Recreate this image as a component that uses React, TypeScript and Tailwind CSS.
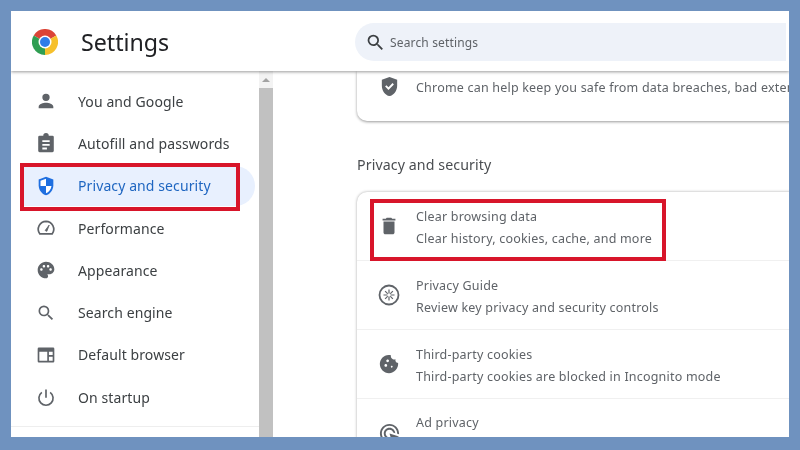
import React from "react";

const G = "#5f6368";

function Ico({ size = 20, children }: { size?: number; children: React.ReactNode }) {
  return (
    <svg width={size} height={size} viewBox="0 0 24 24">
      {children}
    </svg>
  );
}

const searchPath =
  "M15.5 14h-.79l-.28-.27A6.471 6.471 0 0 0 16 9.5 6.500 6.500 0 1 0 9.500 16c1.610 0 3.090-.59 4.230-1.570l.27.28v.79l5 4.990L20.490 19l-4.990-5zm-6 0C7.010 14 5 11.990 5 9.500S7.010 5 9.500 5 14 7.010 14 9.500 11.990 14 9.500 14z";

function ChromeLogo() {
  return (
    <svg width="26" height="26" viewBox="0 0 24 24">
      <path d="M12 12 1.600 6A12 12 0 0 1 22.400 6Z" fill="#db4437" />
      <path d="M12 12 22.400 6A12 12 0 0 1 12 24Z" fill="#f6c02c" />
      <path d="M12 12 12 24A12 12 0 0 1 1.600 6Z" fill="#2f9e52" />
      <circle cx="12" cy="12" r="6" fill="#fff" />
      <circle cx="12" cy="12" r="4.600" fill="#2f7de8" />
    </svg>
  );
}

const sideItems: { label: string; active?: boolean; size?: number; icon: React.ReactNode }[] = [
  {
    label: "You and Google",
    size: 22,
    icon: (
      <path d="M12 12a4 4 0 1 0 0-8 4 4 0 0 0 0 8Zm0 2c-3 0-8 1.500-8 4.200V20h16v-1.800C20 15.500 15 14 12 14Z" fill={G} />
    ),
  },
  {
    label: "Autofill and passwords",
    size: 22,
    icon: (
      <path
        fillRule="evenodd"
        d="M5 4h4a3 3 0 0 1 6 0h4a1.500 1.500 0 0 1 1.500 1.500v15A1.500 1.500 0 0 1 19 22H5a1.500 1.500 0 0 1-1.500-1.500v-15A1.500 1.500 0 0 1 5 4Zm3 5v2h8V9Zm0 4v2h8v-2Zm0 4v2h5v-2Z"
        fill={G}
      />
    ),
  },
  {
    label: "Privacy and security",
    active: true,
    size: 22,
    icon: (
      <>
        <path d="M12 2 4 5v6.090c0 5.050 3.410 9.760 8 10.910 4.590-1.150 8-5.860 8-10.910V5Z" fill="#1f6fe0" />
        <path d="M12 4.100 6 6.300V12h6ZM12 12v7.900c3-1.100 5.500-4.200 6-7.900Z" fill="#fff" />
      </>
    ),
  },
  {
    label: "Performance",
    icon: (
      <>
        <path d="M4.500 19A9.500 9.500 0 0 1 12 4a9.500 9.500 0 0 1 7.500 15Z" fill="none" stroke={G} strokeWidth="2" />
        <path d="M11 15 15.800 8.500 13 16Z" fill={G} stroke={G} strokeWidth="1" />
      </>
    ),
  },
  {
    label: "Appearance",
    icon: (
      <path
        d="M12 2C6.490 2 2 6.490 2 12s4.490 10 10 10c1.380 0 2.500-1.120 2.500-2.500 0-.61-.23-1.200-.64-1.670-.08-.1-.13-.21-.13-.33 0-.28.22-.5.5-.5H16c3.310 0 6-2.690 6-6 0-4.960-4.490-9-10-9zm-5.500 11c-.83 0-1.500-.67-1.500-1.500S5.670 10 6.500 10 8 10.670 8 11.500 7.330 13 6.500 13zm3-4C8.670 9 8 8.330 8 7.500S8.670 6 9.500 6s1.500.67 1.500 1.500S10.330 9 9.500 9zm5 0c-.83 0-1.500-.67-1.500-1.500S13.670 6 14.500 6s1.500.67 1.500 1.500S15.330 9 14.500 9zm3 4c-.83 0-1.500-.67-1.500-1.500s.67-1.500 1.500-1.500 1.500.67 1.500 1.500-.67 1.500-1.500 1.500z"
        fill={G}
      />
    ),
  },
  { label: "Search engine", icon: <path d={searchPath} fill={G} /> },
  {
    label: "Default browser",
    icon: (
      <path
        fillRule="evenodd"
        d="M3.500 3h17A1.500 1.500 0 0 1 22 4.500v15a1.500 1.500 0 0 1-1.500 1.500h-17A1.500 1.500 0 0 1 2 19.500v-15A1.500 1.500 0 0 1 3.500 3ZM4 8v11h9.500V8Zm11.500 0v4H20V8Zm0 6v5H20v-5Z"
        fill={G}
      />
    ),
  },
  {
    label: "On startup",
    icon: (
      <>
        <path d="M12 3v10" stroke={G} strokeWidth="2" fill="none" />
        <path d="M7 6.500a8.500 8.500 0 1 0 10 0" stroke={G} strokeWidth="2" fill="none" />
      </>
    ),
  },
];

function Row({ title, sub, icon }: { title: string; sub?: string; icon: React.ReactNode }) {
  return (
    <div className="relative flex h-[69px] shrink-0 items-center border-b border-[#f0f0f0] last:border-b-0">
      <div className="flex w-[59px] shrink-0 justify-center pl-[5px]">{icon}</div>
      <div className={`text-[12.500px] leading-[22px] tracking-[0.2px] text-[#5f6368] ${sub ? "pt-[4px]" : ""}`}>
        <div>{title}</div>
        {sub ? <div>{sub}</div> : <div className="h-[22px]" />}
      </div>
    </div>
  );
}

export default function App() {
  return (
    <div
      className="h-[450px] w-[800px] overflow-hidden bg-[#6f92bf] pt-[11px] pl-[11px]"
      style={{ fontFamily: '"Noto Sans", "Open Sans", sans-serif' }}
    >
      <div className="relative flex h-[426px] w-[778px] flex-col overflow-hidden bg-white blur-[0.3px]">
        <header className="relative z-10 flex h-[60px] shrink-0 items-center bg-white pt-[2px] shadow-[0_1px_3px_rgba(0,0,0,0.4)]">
          <div className="ml-[21px] flex w-[49px] shrink-0">
            <ChromeLogo />
          </div>
          <div className="w-[274px] shrink-0 pt-[2px] text-[23.200px] leading-none text-[#202124]">Settings</div>
          <div className="mr-[3px] flex h-[38px] flex-1 items-center rounded-l-[19px] bg-[#eef2f9] pl-[10px]">
            <Ico size={21}>
              <path d={searchPath} fill="#3c4043" />
            </Ico>
            <span className="ml-[4px] pt-[2px] text-[12px] tracking-[0.15px] text-[#5f6368]">Search settings</span>
          </div>
        </header>

        <div className="flex min-h-0 flex-1">
          <aside className="flex w-[248px] shrink-0 flex-col pt-[9px]">
            {sideItems.map((it) => (
              <div key={it.label} className="relative flex h-[42.300px] shrink-0 items-center">
                {it.active && (
                  <div className="absolute top-[1px] right-[4px] bottom-[1px] left-[9px] rounded-r-[21px] bg-[#e8f0fe]" />
                )}
                {it.active && (
                  <div className="absolute top-[-1.500px] bottom-[-4.500px] left-[8.500px] w-[220.500px] border-[4px] border-[#d8152a]" />
                )}
                <div className="relative flex w-[67px] shrink-0 justify-center pl-[2px]">
                  <Ico size={it.size ?? 20}>{it.icon}</Ico>
                </div>
                <span
                  className={`relative text-[14px] tracking-[0.1px] ${it.active ? "text-[#1f66c1]" : "text-[#3c4043]"}`}
                >
                  {it.label}
                </span>
              </div>
            ))}
            <div className="mt-auto mb-[10px] border-t border-[#eeeeee]" />
          </aside>

          <div className="flex w-[14px] shrink-0 flex-col bg-[#f3f3f3]">
            <div className="flex h-[17px] shrink-0 items-center justify-center">
              <div className="h-0 w-0 border-x-[4px] border-b-[4px] border-x-transparent border-b-[#a3a3a3]" />
            </div>
            <div className="flex-1 bg-[#c1c1c1]" />
          </div>

          <main className="min-w-0 flex-1 overflow-hidden pl-[84px]">
            <div className="-mr-[20px] flex h-[50px] items-start rounded-b-[10px] bg-white pt-[4px] shadow-[0_1px_3px_rgba(0,0,0,0.4)]">
              <div className="flex w-[59px] shrink-0 justify-center pl-[5px]">
                <Ico size={23}>
                  <path
                    d="M12 2 4 5v6.090c0 5.050 3.410 9.760 8 10.910 4.590-1.150 8-5.860 8-10.910V5l-8-3zm-1.060 13.540L7.400 12l1.410-1.410 2.120 2.120 4.240-4.240 1.410 1.410-5.640 5.660z"
                    fill={G}
                  />
                </Ico>
              </div>
              <div className="pt-[2px] text-[12.500px] leading-[22px] tracking-[0.2px] whitespace-nowrap text-[#5f6368]">
                Chrome can help keep you safe from data breaches, bad extensions, and more
              </div>
            </div>

            <h2 className="mt-[32px] text-[14.200px] leading-[24px] font-normal tracking-[0.1px] text-[#4a4d51]">
              Privacy and security
            </h2>

            <div className="relative -mr-[20px] mt-[15px] flex flex-col rounded-t-[10px] bg-white shadow-[0_0_3px_rgba(0,0,0,0.35)]">
              <div className="absolute top-[7px] left-[13px] z-10 h-[62px] w-[296px] border-[4px] border-[#d8152a]" />
              <Row
                title="Clear browsing data"
                sub="Clear history, cookies, cache, and more"
                icon={
                  <Ico size={22}>
                    <path
                      d="M6 19c0 1.100.9 2 2 2h8c1.100 0 2-.9 2-2V7H6v12zM19 4h-3.500l-1-1h-5l-1 1H5v2h14V4z"
                      fill={G}
                    />
                  </Ico>
                }
              />
              <Row
                title="Privacy Guide"
                sub="Review key privacy and security controls"
                icon={
                  <Ico size={24}>
                    <circle cx="12" cy="12" r="9.500" fill="none" stroke={G} strokeWidth="1.800" />
                    <path
                      d="M12 6.500v11M6.500 12h11M8.100 8.100l7.800 7.800M15.900 8.100l-7.800 7.800"
                      stroke={G}
                      strokeWidth="1.200"
                      fill="none"
                    />
                    <circle cx="12" cy="12" r="1.800" fill="#fff" />
                  </Ico>
                }
              />
              <Row
                title="Third-party cookies"
                sub="Third-party cookies are blocked in Incognito mode"
                icon={
                  <Ico size={22}>
                    <path
                      d="M21.950 10.990c-1.790-.03-3.700-1.950-2.680-4.040-2.970 1-5.780-1.590-5.190-4.560C7.100.74 2 6.410 2 12c0 5.520 4.480 10 10 10 5.890 0 10.510-5.080 9.950-11.010zM8.500 15c-.83 0-1.500-.67-1.500-1.500S7.670 12 8.500 12s1.500.67 1.500 1.500S9.330 15 8.500 15zm2-5C9.670 10 9 9.330 9 8.500S9.670 7 10.500 7s1.500.67 1.500 1.500-.67 1.500-1.500 1.500zm4.500 6c-.55 0-1-.45-1-1 0-.55.45-1 1-1s1 .45 1 1c0 .55-.45 1-1 1z"
                      fill={G}
                    />
                  </Ico>
                }
              />
              <Row
                title="Ad privacy"
                icon={
                  <Ico size={23}>
                    <path
                      d="M11.710 17.990C8.530 17.840 6 15.220 6 12c0-3.310 2.690-6 6-6 3.220 0 5.840 2.530 5.990 5.710l-2.100-.63C15.480 9.350 13.890 8 12 8c-2.210 0-4 1.790-4 4 0 1.890 1.350 3.480 3.080 3.890l.63 2.100zM22 12c0 .3-.01.6-.04.9l-1.970-.59c.01-.1.01-.21.01-.31 0-4.420-3.580-8-8-8s-8 3.580-8 8 3.580 8 8 8c.1 0 .21 0 .31-.01l.59 1.970c-.3.03-.6.04-.9.04-5.520 0-10-4.480-10-10S6.480 2 12 2s10 4.480 10 10zm-3.770 4.260L22 15l-10-3 3 10 1.260-3.770 4.270 4.270 1.960-1.960-4.260-4.280z"
                      fill={G}
                    />
                  </Ico>
                }
              />
            </div>
          </main>
        </div>
      </div>
    </div>
  );
}
